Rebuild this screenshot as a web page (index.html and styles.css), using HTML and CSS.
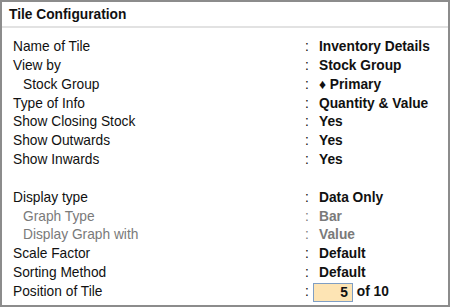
FILE: index.html
```html
<!DOCTYPE html>
<html lang="en">
<head>
  <meta charset="UTF-8">
  <title>Tile Configuration</title>
  <link rel="stylesheet" href="styles.css">
</head>
<body>
  <div class="panel">
    <div class="panel-title">Tile Configuration</div>

    <div class="fields">
      <div class="row"><span class="label">Name of Tile</span><span class="colon">:</span><span class="value">Inventory Details</span></div>
      <div class="row"><span class="label">View by</span><span class="colon">:</span><span class="value">Stock Group</span></div>
      <div class="row sub"><span class="label">Stock Group</span><span class="colon">:</span><span class="value">&#9830; Primary</span></div>
      <div class="row"><span class="label">Type of Info</span><span class="colon">:</span><span class="value">Quantity &amp; Value</span></div>
      <div class="row"><span class="label">Show Closing Stock</span><span class="colon">:</span><span class="value">Yes</span></div>
      <div class="row"><span class="label">Show Outwards</span><span class="colon">:</span><span class="value">Yes</span></div>
      <div class="row"><span class="label">Show Inwards</span><span class="colon">:</span><span class="value">Yes</span></div>
      <div class="row blank"></div>
      <div class="row"><span class="label">Display type</span><span class="colon">:</span><span class="value">Data Only</span></div>
      <div class="row sub muted"><span class="label">Graph Type</span><span class="colon">:</span><span class="value">Bar</span></div>
      <div class="row sub muted"><span class="label">Display Graph with</span><span class="colon">:</span><span class="value">Value</span></div>
      <div class="row"><span class="label">Scale Factor</span><span class="colon">:</span><span class="value">Default</span></div>
      <div class="row"><span class="label">Sorting Method</span><span class="colon">:</span><span class="value">Default</span></div>
      <div class="row"><span class="label">Position of Tile</span><span class="colon">:</span><span class="value"><span class="num-box">5</span> of 10</span></div>
    </div>
  </div>
</body>
</html>
```

FILE: styles.css
```css
* { box-sizing: border-box; }

body {
  margin: 0;
  font-family: 'Liberation Sans', Arial, sans-serif;
  font-size: 13.75px;
  color: #111;
  background: #fff;
}

.panel {
  width: 450px;
  height: 307px;
  border: 2px solid #8c8c8c;
  background: #fff;
}

.panel-title {
  height: 26px;
  padding: 5px 0 0 7px;
  font-weight: bold;
  border-bottom: 2px solid #e2e2e2;
}

.fields {
  padding: 10px 0 0 11px;
}

.row {
  display: flex;
  height: 18.85px;
  line-height: 18.85px;
}

.label {
  width: 292px;
}

.sub .label {
  padding-left: 10px;
}

.colon {
  width: 14px;
}

.value {
  font-weight: bold;
}

.muted {
  color: #7a7a7a;
}

.num-box {
  display: inline-block;
  width: 40px;
  height: 19px;
  line-height: 17px;
  margin: 0 0 0 -6px;
  padding-right: 4px;
  text-align: right;
  background: #fde4b4;
  border: 1px solid #7f9ec4;
  vertical-align: top;
}
```
